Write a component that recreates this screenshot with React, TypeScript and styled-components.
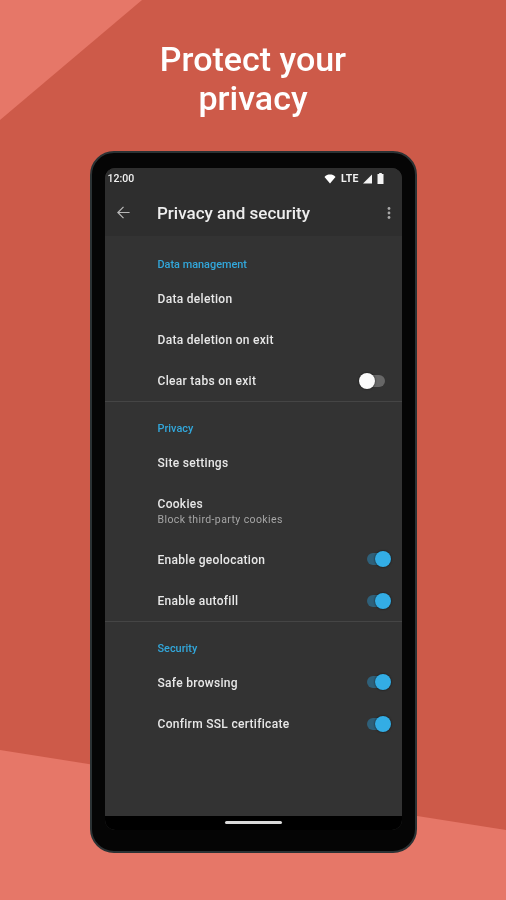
import styled, { createGlobalStyle } from "styled-components";

const GlobalStyle = createGlobalStyle`
    html, body {
        margin: 0;
        padding: 0;
        background: #cd5a49;
    }
`;

const Page = styled.div`
    position: relative;
    width: 506px;
    height: 900px;
    overflow: hidden;
    background: #cd5a49;
    font-family: Roboto, "Liberation Sans", sans-serif;
    display: flex;
    flex-direction: column;
    align-items: center;

    /* the two lighter corners of the backdrop */
    &::before {
        content: "";
        position: absolute;
        inset: 0;
        background: #e67768;
        clip-path: polygon(0 0, 142px 0, 0 120px);
    }
    &::after {
        content: "";
        position: absolute;
        inset: 0;
        background: #e67768;
        clip-path: polygon(0 750px, 506px 830px, 506px 900px, 0 900px);
    }
`;

const Title = styled.h1`
    position: relative;
    z-index: 1;
    margin: 40px 0 0;
    color: #fff;
    font-size: 34px;
    line-height: 39px;
    font-weight: 500;
    text-align: center;
    filter: blur(0.4px);
`;

const Phone = styled.div`
    position: relative;
    z-index: 1;
    box-sizing: border-box;
    width: 327px;
    height: 702px;
    margin-top: 33px;
    padding: 15px 13px 21px 13px;
    background: #050505;
    border: 2px solid #2b3234;
    border-radius: 24px;
    filter: blur(0.5px);
`;

const Screen = styled.div`
    height: 100%;
    border-radius: 10px;
    overflow: hidden;
    background: #333333;
    display: flex;
    flex-direction: column;
`;

const StatusBar = styled.div`
    height: 21px;
    flex: none;
    display: flex;
    align-items: center;
    justify-content: space-between;
    padding: 0 18px 0 3px;
    background: #2e2e2e;
    color: #f2f2f2;
    font-size: 10.5px;
    font-weight: 500;
`;

const StatusIcons = styled.div`
    display: flex;
    align-items: center;
    gap: 3px;
`;

const Lte = styled.span`
    margin-left: 2px;
    font-size: 10.5px;
    font-weight: 700;
    letter-spacing: 0.2px;
`;

const Toolbar = styled.div`
    height: 47px;
    flex: none;
    display: flex;
    align-items: center;
    padding: 0 11px 0 11px;
    background: #2e2e2e;
    color: #eeeeee;
`;

const ToolbarTitle = styled.div`
    flex: 1;
    margin-left: 26.5px;
    font-size: 17px;
    font-weight: 500;
    color: #eeeeee;
`;

const Content = styled.div`
    flex: 1;
    min-height: 0;
    padding-top: 2px;
`;

const Section = styled.section<{ $divided?: boolean }>`
    border-bottom: ${(props) => (props.$divided ? "1px solid #454545" : "none")};
`;

const SectionTitle = styled.div`
    height: 39.5px;
    box-sizing: border-box;
    padding: 20px 0 0 53px;
    font-size: 10.9px;
    line-height: 14px;
    font-weight: 500;
    color: #32a8dc;
`;

const Row = styled.div<{ $tall?: boolean }>`
    box-sizing: border-box;
    height: ${(props) => (props.$tall ? "55.4px" : "41.3px")};
    display: flex;
    align-items: center;
    justify-content: space-between;
    padding: 0 13px 0 52px;
`;

const RowText = styled.div`
    padding: 2px 0 0 1px;
`;

const RowLabel = styled.div`
    font-size: 12px;
    line-height: 15px;
    font-weight: 500;
    letter-spacing: 0.3px;
    color: #e8e8e8;
`;

const RowHint = styled.div`
    margin-top: 1px;
    font-size: 10.5px;
    line-height: 14px;
    color: #a6a6a6;
    letter-spacing: 0.4px;
`;

const Track = styled.div<{ $on?: boolean }>`
    position: relative;
    width: 22px;
    height: 12px;
    border-radius: 6px;
    margin-right: ${(props) => (props.$on ? "0" : "4px")};
    background: ${(props) => (props.$on ? "#2f6079" : "#676767")};
`;

const Thumb = styled.div<{ $on?: boolean }>`
    position: absolute;
    top: -2px;
    left: ${(props) => (props.$on ? "8px" : "-4px")};
    width: 16px;
    height: 16px;
    border-radius: 50%;
    background: ${(props) => (props.$on ? "#33ade5" : "#fafafa")};
    box-shadow: 0 0 2px rgba(0, 0, 0, 0.8);
`;

const NavBar = styled.div`
    height: 14px;
    flex: none;
    background: #000;
    display: flex;
    justify-content: center;
    padding-top: 5px;
    box-sizing: border-box;
`;

const NavPill = styled.div`
    width: 57px;
    height: 3px;
    border-radius: 2px;
    background: #d8d8d8;
`;

function Toggle({ on }: { on?: boolean }) {
    return (
        <Track $on={on}>
            <Thumb $on={on} />
        </Track>
    );
}

function App() {
    return (
        <Page>
            <GlobalStyle />
            <Title>
                Protect your
                <br />
                privacy
            </Title>
            <Phone>
                <Screen>
                    <StatusBar>
                        <span>12:00</span>
                        <StatusIcons>
                            <svg width="12" height="10" viewBox="0 0 12 10">
                                <path d="M0.5 3 C2 1 4 0.5 6 0.5 C8 0.5 10 1 11.5 3 L6 9.5 Z" fill="#fff" />
                            </svg>
                            <Lte>LTE</Lte>
                            <svg width="10" height="10" viewBox="0 0 10 10">
                                <path d="M10 0.5 V9.5 H1 Z" fill="#f4f4f4" />
                            </svg>
                            <svg width="7" height="11" viewBox="0 0 7 11" style={{ marginLeft: 2 }}>
                                <path d="M2.2 0 H4.8 V1 H6.5 V11 H0.5 V1 H2.2 Z" fill="#f4f4f4" />
                            </svg>
                        </StatusIcons>
                    </StatusBar>
                    <Toolbar>
                        <svg width="15" height="15" viewBox="0 0 16 16" fill="none" stroke="#b8b8b8" strokeWidth="1.3">
                            <path d="M14.5 8 H2 M8 2 L2 8 L8 14" />
                        </svg>
                        <ToolbarTitle>Privacy and security</ToolbarTitle>
                        <svg width="4" height="14" viewBox="0 0 4 14" fill="#a8a8a8">
                            <circle cx="2" cy="2.5" r="1.4" />
                            <circle cx="2" cy="7" r="1.4" />
                            <circle cx="2" cy="11.5" r="1.4" />
                        </svg>
                    </Toolbar>
                    <Content>
                        <Section $divided>
                            <SectionTitle>Data management</SectionTitle>
                            <Row>
                                <RowText>
                                    <RowLabel>Data deletion</RowLabel>
                                </RowText>
                            </Row>
                            <Row>
                                <RowText>
                                    <RowLabel>Data deletion on exit</RowLabel>
                                </RowText>
                            </Row>
                            <Row>
                                <RowText>
                                    <RowLabel>Clear tabs on exit</RowLabel>
                                </RowText>
                                <Toggle />
                            </Row>
                        </Section>
                        <Section $divided>
                            <SectionTitle>Privacy</SectionTitle>
                            <Row>
                                <RowText>
                                    <RowLabel>Site settings</RowLabel>
                                </RowText>
                            </Row>
                            <Row $tall>
                                <RowText>
                                    <RowLabel>Cookies</RowLabel>
                                    <RowHint>Block third-party cookies</RowHint>
                                </RowText>
                            </Row>
                            <Row>
                                <RowText>
                                    <RowLabel>Enable geolocation</RowLabel>
                                </RowText>
                                <Toggle on />
                            </Row>
                            <Row>
                                <RowText>
                                    <RowLabel>Enable autofill</RowLabel>
                                </RowText>
                                <Toggle on />
                            </Row>
                        </Section>
                        <Section>
                            <SectionTitle>Security</SectionTitle>
                            <Row>
                                <RowText>
                                    <RowLabel>Safe browsing</RowLabel>
                                </RowText>
                                <Toggle on />
                            </Row>
                            <Row>
                                <RowText>
                                    <RowLabel>Confirm SSL certificate</RowLabel>
                                </RowText>
                                <Toggle on />
                            </Row>
                        </Section>
                    </Content>
                    <NavBar>
                        <NavPill />
                    </NavBar>
                </Screen>
            </Phone>
        </Page>
    );
}

export default App;
